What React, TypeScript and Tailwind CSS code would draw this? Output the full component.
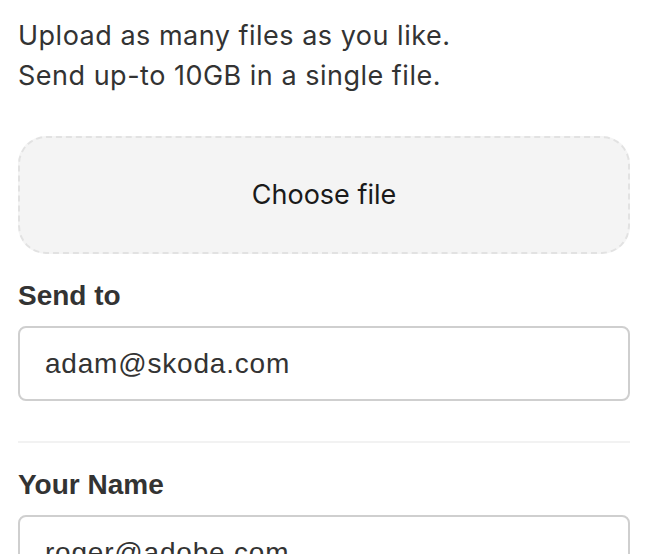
export default function App() {
    return (
        <div className="min-h-screen bg-white px-[18px] pt-4 text-[#333]">
            <p className="text-[27px] leading-[40px] tracking-[0.5px] text-[#333] [font-family:Inter,'Liberation_Sans',sans-serif]">
                Upload as many files as you like.
                <br />
                Send up-to 10GB in a single file.
            </p>

            <button
                type="button"
                className="mt-10 flex h-[118px] w-full items-center justify-center rounded-[28px] border-2 border-dashed border-[#e2e2e2] bg-[#f4f4f4] text-[27px] text-[#1a1a1a] [font-family:Inter,sans-serif]"
            >
                Choose file
            </button>

            <div className="mt-6 [font-family:'Liberation_Sans',Arial,sans-serif]">
                <label className="block text-[28px] font-bold leading-9 text-[#333]">Send to</label>
                <input
                    type="text"
                    defaultValue="adam@skoda.com"
                    className="mt-3 h-[75px] w-full rounded-lg border-2 border-[#cfcfcf] px-[25px] text-[28px] tracking-[0.8px] text-[#333] outline-none"
                />

                <div className="mt-10 h-[2px] w-full bg-[#f2f2f2]" />

                <label className="mt-6 block text-[28px] font-bold leading-9 text-[#333]">Your Name</label>
                <input
                    type="text"
                    defaultValue="roger@adobe.com"
                    className="mt-3 h-[75px] w-full rounded-lg border-2 border-[#cfcfcf] px-[25px] text-[28px] tracking-[0.8px] text-[#333] outline-none"
                />
            </div>
        </div>
    );
}
